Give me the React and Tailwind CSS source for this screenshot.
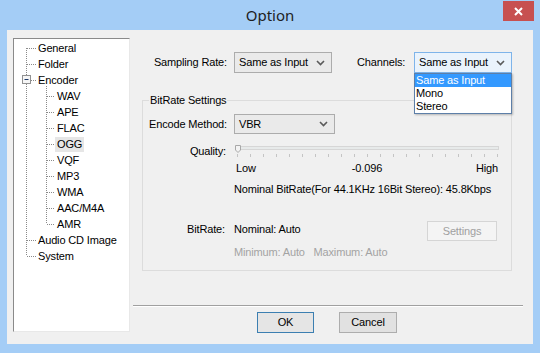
import React from "react";

const font = { fontFamily: '"Liberation Sans", Arial, sans-serif' };

function Chevron() {
  return (
    <svg width="9" height="6" viewBox="0 0 9 6" className="shrink-0">
      <polyline points="1,1 4.5,4.5 8,1" fill="none" stroke="#5a5a5a" strokeWidth="1.6" />
    </svg>
  );
}

function Combo({ value, width, height = "h-[21px]", open = false, children }) {
  return (
    <div className={`relative ${width} ${height}`}>
      <div
        className={`w-full h-full flex items-center justify-between pl-[4px] pr-[6px] border ${
          open ? "border-[#7eb4ea] bg-[#eaf3fc]" : "border-[#acacac] bg-[#eaeaea]"
        }`}
      >
        <span className="text-[11px] text-black">{value}</span>
        <Chevron />
      </div>
      {children}
    </div>
  );
}

const treeItems = [
  { label: "General", level: 0 },
  { label: "Folder", level: 0 },
  { label: "Encoder", level: 0 },
  { label: "WAV", level: 1 },
  { label: "APE", level: 1 },
  { label: "FLAC", level: 1 },
  { label: "OGG", level: 1, sel: true },
  { label: "VQF", level: 1 },
  { label: "MP3", level: 1 },
  { label: "WMA", level: 1 },
  { label: "AAC/M4A", level: 1 },
  { label: "AMR", level: 1 },
  { label: "Audio CD Image", level: 0 },
  { label: "System", level: 0 },
];

function TreeLines() {
  const rowC = (i) => 9 + i * 16;
  const rootRows = [0, 1, 2, 12, 13];
  const childRows = [3, 4, 5, 6, 7, 8, 9, 10, 11];
  const dash = { stroke: "#8a8a8a", strokeWidth: 1, strokeDasharray: "1 1" };
  return (
    <svg className="absolute left-0 top-0 pointer-events-none" width="115" height="240">
      <line x1="12.5" y1={rowC(0)} x2="12.5" y2={rowC(13)} {...dash} />
      {rootRows.map((r) => (
        <line key={r} x1={r === 2 ? 17 : 13} y1={rowC(r) + 0.5} x2="22" y2={rowC(r) + 0.5} {...dash} />
      ))}
      <line x1="32.5" y1={rowC(2) + 6} x2="32.5" y2={rowC(11)} {...dash} />
      {childRows.map((r) => (
        <line key={r} x1="33" y1={rowC(r) + 0.5} x2="41" y2={rowC(r) + 0.5} {...dash} />
      ))}
      <rect x="8.5" y={rowC(2) - 4.5} width="8" height="8" fill="#f6f6f6" stroke="#919191" />
      <line x1="10.5" y1={rowC(2) - 0.5} x2="14.5" y2={rowC(2) - 0.5} stroke="#1e3a6a" strokeWidth="1" />
    </svg>
  );
}

function Slider() {
  const ticks = Array.from({ length: 21 }, (_, i) => 3.5 + i * 13);
  return (
    <svg width="266" height="18" className="block">
      <rect x="2.5" y="4.5" width="262" height="3" fill="#e7eaea" stroke="#d6d6d6" />
      {ticks.map((x, i) => (
        <line key={i} x1={x} y1="12" x2={x} y2="15" stroke="#c4c4c4" />
      ))}
      <polygon points="1.5,3.5 6.5,3.5 6.5,8 4,10.5 1.5,8" fill="#f3f3f3" stroke="#a8a8a8" />
    </svg>
  );
}

export default function App() {
  return (
    <div className="w-[540px] h-[353px] bg-[#a4cdf6] flex flex-col overflow-hidden tracking-[-0.15px]" style={font}>
      {/* Title bar */}
      <div className="h-[30px] grid grid-cols-[1fr_auto_1fr] items-start shrink-0">
        <div />
        <div
          className="pt-[5px] text-[15px] leading-[20px] text-[#1e1e1e] tracking-normal"
          style={{ fontFamily: '"Noto Sans", "Open Sans", sans-serif' }}
        >
          Option
        </div>
        <div className="flex justify-end pr-[6px] pt-[1px]">
          <div className="w-[31px] h-[20px] bg-[#c75050] flex items-center justify-center">
            <svg width="9" height="9" viewBox="0 0 9 9">
              <path d="M1 1L8 8M8 1L1 8" stroke="white" strokeWidth="2" />
            </svg>
          </div>
        </div>
      </div>

      {/* Client area */}
      <div className="mx-[7px] h-[314px] bg-[#f0f0f0] flex shrink-0">
        {/* Tree */}
        <div className="mt-[8px] ml-[6px] w-[117px] h-[294px] bg-white border-l border-t border-[#8a8a8a] border-r-[#e8e8e8] border-b-[#e8e8e8] border-r border-b shrink-0">
          <div className="relative pt-[1px]">
            <TreeLines />
            {treeItems.map((it) => (
              <div
                key={it.label}
                className={`h-[16px] flex items-center ${it.level === 0 ? "pl-[22px]" : "pl-[41px]"}`}
              >
                <span
                  className={`px-[2px] h-[15px] leading-[15px] text-[11px] text-black ${
                    it.sel ? "bg-[#e6e6e6]" : ""
                  }`}
                >
                  {it.label}
                </span>
              </div>
            ))}
          </div>
        </div>

        {/* Right side */}
        <div className="ml-[3px] mr-[10px] flex-1 flex flex-col">
          {/* Row 1 */}
          <div className="mt-[22px] h-[21px] flex items-center">
            <div className="w-[101px] pr-[7px] text-right text-[11px] text-black">Sampling Rate:</div>
            <Combo value="Same as Input" width="w-[98px]" />
            <div className="w-[82px] pl-[25px] text-[11px] text-black">Channels:</div>
            <Combo value="Same as Input" width="w-[98px]" open>
              <div className="absolute left-0 top-full w-[98px] bg-white border border-[#5d7fa8] shadow-[1px_1px_2px_rgba(0,0,0,0.25)] z-10">
                <div className="h-[13px] leading-[13px] pl-[1px] text-[11px] bg-[#3399ff] text-white">Same as Input</div>
                <div className="h-[13px] leading-[13px] pl-[1px] text-[11px] text-black">Mono</div>
                <div className="h-[13px] leading-[13px] pl-[1px] text-[11px] text-black">Stereo</div>
              </div>
            </Combo>
          </div>

          {/* Group box */}
          <div className="mt-[27px] ml-[9px] w-[370px] h-[171px] border border-[#dcdcdc] flex flex-col">
            <div className="-mt-[8px] ml-[6px] px-[1px] w-fit h-[14px] leading-[14px] bg-[#f0f0f0] text-[11px] text-black">
              BitRate Settings
            </div>

            <div className="mt-[7px] h-[20px] flex items-center">
              <div className="w-[91px] pr-[7px] text-right text-[11px] text-black">Encode Method:</div>
              <Combo value="VBR" width="w-[101px]" height="h-[20px]" />
            </div>

            <div className="mt-[8px] h-[18px] flex items-center">
              <div className="w-[91px] pr-[8px] text-right text-[11px] text-black">Quality:</div>
              <Slider />
            </div>

            <div className="mt-[1px] h-[14px] flex">
              <div className="w-[91px]" />
              <div className="w-[266px] grid grid-cols-3 px-[2px] text-[11px] text-black leading-[14px]">
                <span className="text-left">Low</span>
                <span className="text-center">-0.096</span>
                <span className="text-right">High</span>
              </div>
            </div>

            <div className="mt-[7px] h-[14px] flex leading-[14px]">
              <div className="w-[91px]" />
              <span className="text-[11px] text-black">Nominal BitRate(For 44.1KHz 16Bit Stereo): 45.8Kbps</span>
            </div>

            <div className="mt-[26px] flex">
              <div className="w-[91px] pr-[9px] text-right text-[11px] text-black h-[14px] leading-[14px]">BitRate:</div>
              <div className="flex flex-col">
                <span className="h-[14px] leading-[14px] text-[11px] text-black">Nominal: Auto</span>
                <span className="mt-[9px] h-[14px] leading-[14px] text-[11px] text-[#a3a3a3]">
                  Minimum: Auto&nbsp;&nbsp;&nbsp;Maximum: Auto
                </span>
              </div>
              <div className="ml-auto mr-[14px] mt-[-1px] w-[70px] h-[20px] border border-[#d5d5d5] bg-[#f4f4f4] flex items-center justify-center text-[11px] text-[#a0a0a0]">
                Settings
              </div>
            </div>
          </div>

          {/* Separator */}
          <div className="mt-[34px] h-[2px] border-t border-[#a0a0a0] border-b border-b-white" />

          {/* Buttons */}
          <div className="mt-[5px] flex justify-center gap-[25px] pr-[2px]">
            <div className="w-[57px] h-[21px] border border-[#3c7fb1] bg-[#e5e5e5] flex items-center justify-center text-[11px] text-black">
              OK
            </div>
            <div className="w-[58px] h-[21px] border border-[#adadad] bg-[#e1e1e1] flex items-center justify-center text-[11px] text-black">
              Cancel
            </div>
          </div>
        </div>
      </div>
    </div>
  );
}
